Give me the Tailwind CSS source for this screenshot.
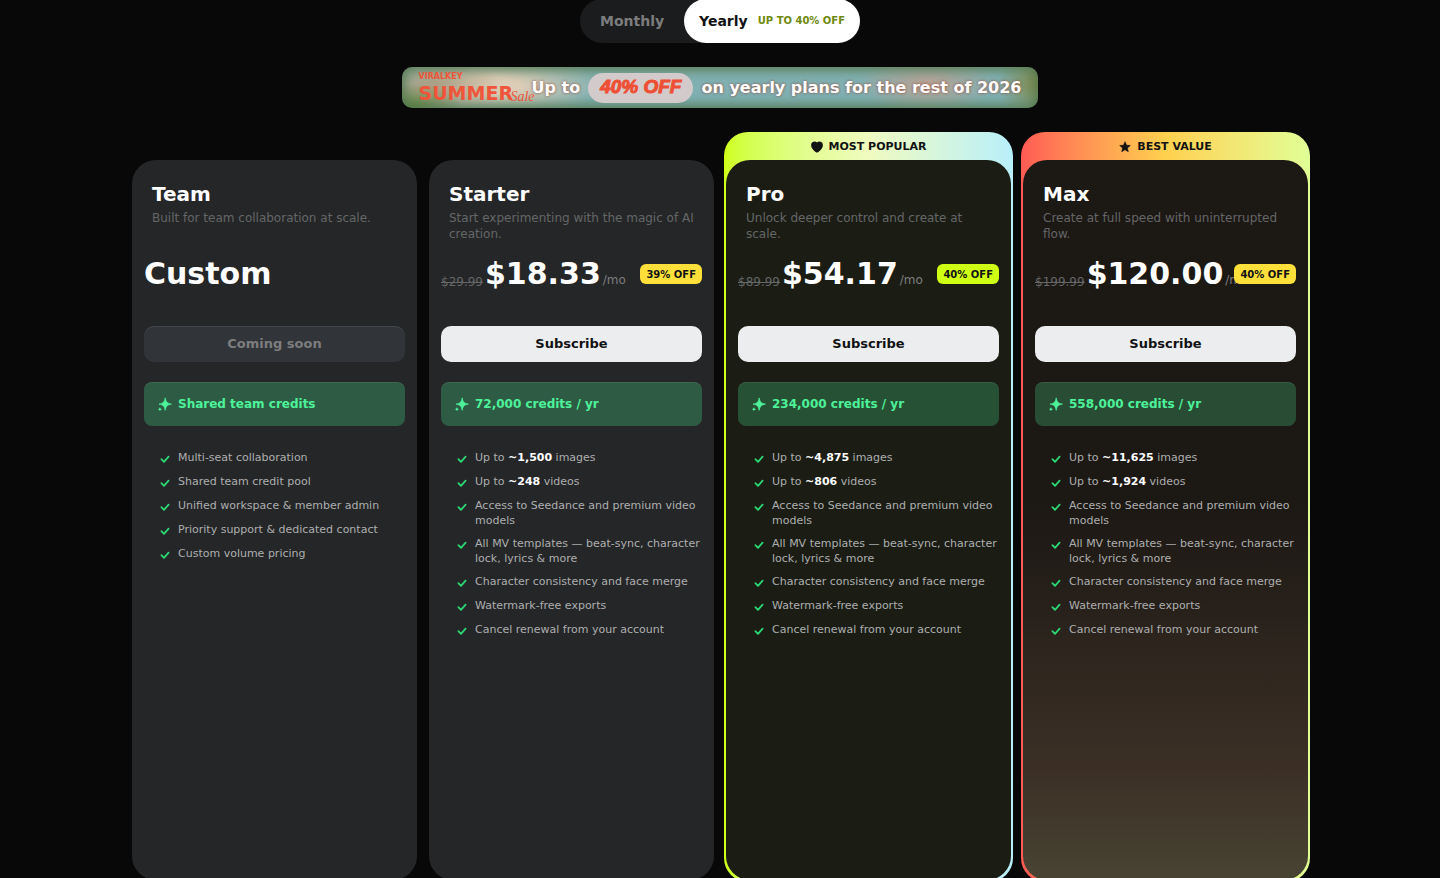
<!DOCTYPE html>
<html lang="en">
<head>
  <meta charset="UTF-8" />
  <meta name="viewport" content="width=device-width, initial-scale=1.0" />
  <title>Viralkey Pricing</title>
  <script src="https://cdn.jsdelivr.net/npm/@tailwindcss/browser@4"></script>
</head>
<body class="min-h-screen overflow-x-hidden bg-[#080808] font-['DejaVu_Sans',sans-serif] text-white">

  <!-- Icons -->
  <svg class="hidden">
    <symbol id="check" viewBox="0 0 10 16">
      <path d="M1.4 9.2 4 11.8 8.6 6.7" fill="none" stroke="currentColor" stroke-width="1.8" stroke-linecap="round" stroke-linejoin="round" />
    </symbol>
    <symbol id="sparkle" viewBox="0 0 14 14">
      <path d="M7.2 .9C7.9 4.9 9.2 6.4 13.4 7.1 9.200 7.800 7.900 9.300 7.200 13.300 6.500 9.300 5.200 7.800 1 7.100 5.200 6.400 6.500 4.900 7.200 .9Z" fill="currentColor" stroke="currentColor" stroke-width=".8" stroke-linejoin="round" />
      <path d="M1.900 10.200 2.600 11.500 3.900 12.200 2.600 12.900 1.900 14 1.200 12.900 0 12.200 1.200 11.500Z" fill="currentColor" />
    </symbol>
  </svg>

  <main class="mx-auto flex max-w-[1176px] flex-col items-center gap-6">

    <!-- Billing toggle -->
    <div class="-mt-px flex rounded-full bg-[#1b1c1d] text-sm font-bold">
      <button type="button" class="h-11 px-5 text-[#7c7d7e]">Monthly</button>
      <button type="button" class="flex h-11 items-center gap-2.5 rounded-full bg-white px-[15px] text-[#111213]">
        Yearly <span class="text-[10px] text-[#6f8a10]">UP TO 40% OFF</span>
      </button>
    </div>

    <!-- Promo banner -->
    <div class="relative flex h-[41px] items-center gap-2 overflow-hidden rounded-[10px] bg-[radial-gradient(ellipse_50px_24px_at_10px_100%,#5f8238,transparent),radial-gradient(ellipse_70px_30px_at_30px_50%,#a99c80,transparent),radial-gradient(ellipse_110px_34px_at_90px_45%,#dccdb6_25%,transparent),radial-gradient(ellipse_70px_30px_at_525px_40%,#b9a294,transparent),radial-gradient(ellipse_40px_40px_at_100%_40%,#7f8745,transparent),linear-gradient(#82b0b2,#7fb0b4)] px-4 pl-[129px] text-base font-bold whitespace-nowrap shadow-[inset_0_0_12px_3px_#55794f]">
      <div class="absolute top-1 left-4 text-[#ee553a]">
        <p class="text-[8px] leading-3">VIRALKEY</p>
        <p class="text-[19px] leading-5">SUMMER</p>
      </div>
      <span class="absolute top-5 left-[108px] font-['Liberation_Serif',serif] text-sm font-normal italic text-[#ee553a]">Sale</span>
      <span class="text-shadow-[0_0_3px_#8c4032]">Up to</span>
      <span class="flex h-[30px] items-center rounded-full bg-[#d3cbcb] px-3 font-['Liberation_Sans',sans-serif] text-[19px] italic text-[#ee4f34] [-webkit-text-stroke:1px_#ee4f34]">40% OFF</span>
      <span class="text-shadow-[0_0_3px_#8c4032]">on yearly plans for the rest of 2026</span>
    </div>

    <!-- Plans -->
    <div id="plans" class="grid w-full grid-cols-4 gap-3"></div>
  </main>

  <script>
    const shared = [
      "Access to Seedance and premium video models",
      "All MV templates — beat-sync, character lock, lyrics &amp; more",
      "Character consistency and face merge",
      "Watermark-free exports",
      "Cancel renewal from your account"
    ];

    const usage = (images, videos) => [
      `Up to <b class="text-white">~${images}</b> images`,
      `Up to <b class="text-white">~${videos}</b> videos`
    ];

    const heart = `<svg class="h-3 w-3" viewBox="0 0 12 12" fill="currentColor"><path d="M6 1.4C7.1.2 9.2 0 10.6 1.2 12.2 2.6 12.3 5 11 7.2 9.9 9 8 10.6 6.6 11.4a1.2 1.2 0 0 1-1.2 0C4 10.6 2.1 9 1 7.2-.3 5-.2 2.6 1.4 1.2 2.8 0 4.9.2 6 1.4Z"/></svg>`;
    const star = `<svg class="h-3 w-3" viewBox="0 0 12 12" fill="currentColor" stroke="currentColor" stroke-width=".6" stroke-linejoin="round"><path d="M6 .7 7.5 4.2 11.3 4.5 8.4 7 9.3 10.700 6 8.700 2.700 10.700 3.600 7 .7 4.500 4.500 4.200Z"/></svg>`;

    const plans = [
      {
        name: "Team", text: "Built for team collaboration at scale.", price: "Custom",
        credits: "Shared team credits", wrap: "pt-7", card: "bg-[#252628]", box: "bg-[#2e5b44]",
        features: ["Multi-seat collaboration", "Shared team credit pool", "Unified workspace &amp; member admin", "Priority support &amp; dedicated contact", "Custom volume pricing"]
      },
      {
        name: "Starter", text: "Start experimenting with the magic of AI creation.", old: "$29.99", price: "$18.33", off: "39% OFF",
        credits: "72,000 credits / yr", wrap: "pt-7", card: "bg-[#252628]", box: "bg-[#2e5b44]", tag: "bg-[#ffe03a]",
        features: [...usage("1,500", "248"), ...shared]
      },
      {
        name: "Pro", text: "Unlock deeper control and create at scale.", old: "$89.99", price: "$54.17", off: "40% OFF",
        credits: "234,000 credits / yr", badge: heart + "MOST POPULAR",
        wrap: "-mx-0.5 -mb-0.5 px-0.5 pb-0.5 rounded-3xl bg-linear-to-r from-[#cfff12] via-[#f0fbc0] to-[#b8effa]",
        card: "bg-[#1b1d15]", box: "bg-[#275134]", tag: "bg-[#cfff12]",
        features: [...usage("4,875", "806"), ...shared]
      },
      {
        name: "Max", text: "Create at full speed with uninterrupted flow.", old: "$199.99", price: "$120.00", off: "40% OFF",
        credits: "558,000 credits / yr", badge: star + "BEST VALUE",
        wrap: "-mx-0.5 -mb-0.5 px-0.5 pb-0.5 rounded-3xl bg-linear-to-r from-[#ff5a54] via-[#ffd04e] to-[#e0ff96]",
        card: "bg-linear-to-b from-[#1c1814] from-48% via-[#3c3026] via-85% to-[#484433]", box: "bg-[#284d34]", tag: "bg-[#ffe03a]",
        features: [...usage("11,625", "1,924"), ...shared]
      }
    ];

    document.getElementById("plans").innerHTML = plans.map((p) => `
      <section class="${p.wrap}">
        ${p.badge ? `<div class="flex h-7 items-center justify-center gap-1.5 pt-0.5 text-[11px] leading-4 font-bold text-[#111213]">${p.badge}</div>` : ""}
        <div class="flex min-h-[720px] flex-col rounded-3xl px-3 pt-[22px] pb-6 ${p.card}">
          <div class="h-16 px-2">
            <h2 class="text-xl leading-6 font-bold">${p.name}</h2>
            <p class="mt-1 text-xs leading-4 text-[#646667]">${p.text}</p>
          </div>
          <div class="relative mt-2 flex h-10 items-baseline gap-0.5 whitespace-nowrap">
            ${p.old ? `<s class="self-end text-xs leading-6 text-[#646667]">${p.old}</s>` : ""}
            <span class="text-[30px] leading-10 font-bold">${p.price}</span>
            ${p.off ? `<span class="text-xs text-[#7c7d7e]">/mo</span>
            <span class="absolute top-2.5 right-0 flex h-5 items-center rounded-md px-1.5 text-[10px] font-bold text-[#111213] ${p.tag}">${p.off}</span>` : ""}
          </div>
          ${p.off
            ? `<button type="button" class="mt-8 h-9 rounded-[10px] bg-[#ecedef] text-[13px] font-bold text-[#111213]">Subscribe</button>`
            : `<button type="button" disabled class="mt-8 h-9 rounded-[10px] bg-[#313439] text-[13px] font-bold text-[#7c7d7e] shadow-[inset_0_1px_0_#414749]">Coming soon</button>`}
          <div class="mt-5 flex h-11 items-center gap-1.5 rounded-lg px-3.5 text-xs font-bold text-[#4df29a] inset-shadow-[0_1px_0_#ffffff14] ${p.box}">
            <svg class="h-3.5 w-3.5"><use href="#sparkle" /></svg>${p.credits}
          </div>
          <ul class="mt-6 flex flex-col gap-2 pl-4 text-[11px] leading-[15px] text-[#adaeaf]">
            ${p.features.map((f) => `<li class="flex min-h-4 gap-2"><svg class="h-4 w-2.5 shrink-0 text-[#2bd673]"><use href="#check" /></svg><span>${f}</span></li>`).join("")}
          </ul>
        </div>
      </section>`).join("");
  </script>
</body>
</html>
